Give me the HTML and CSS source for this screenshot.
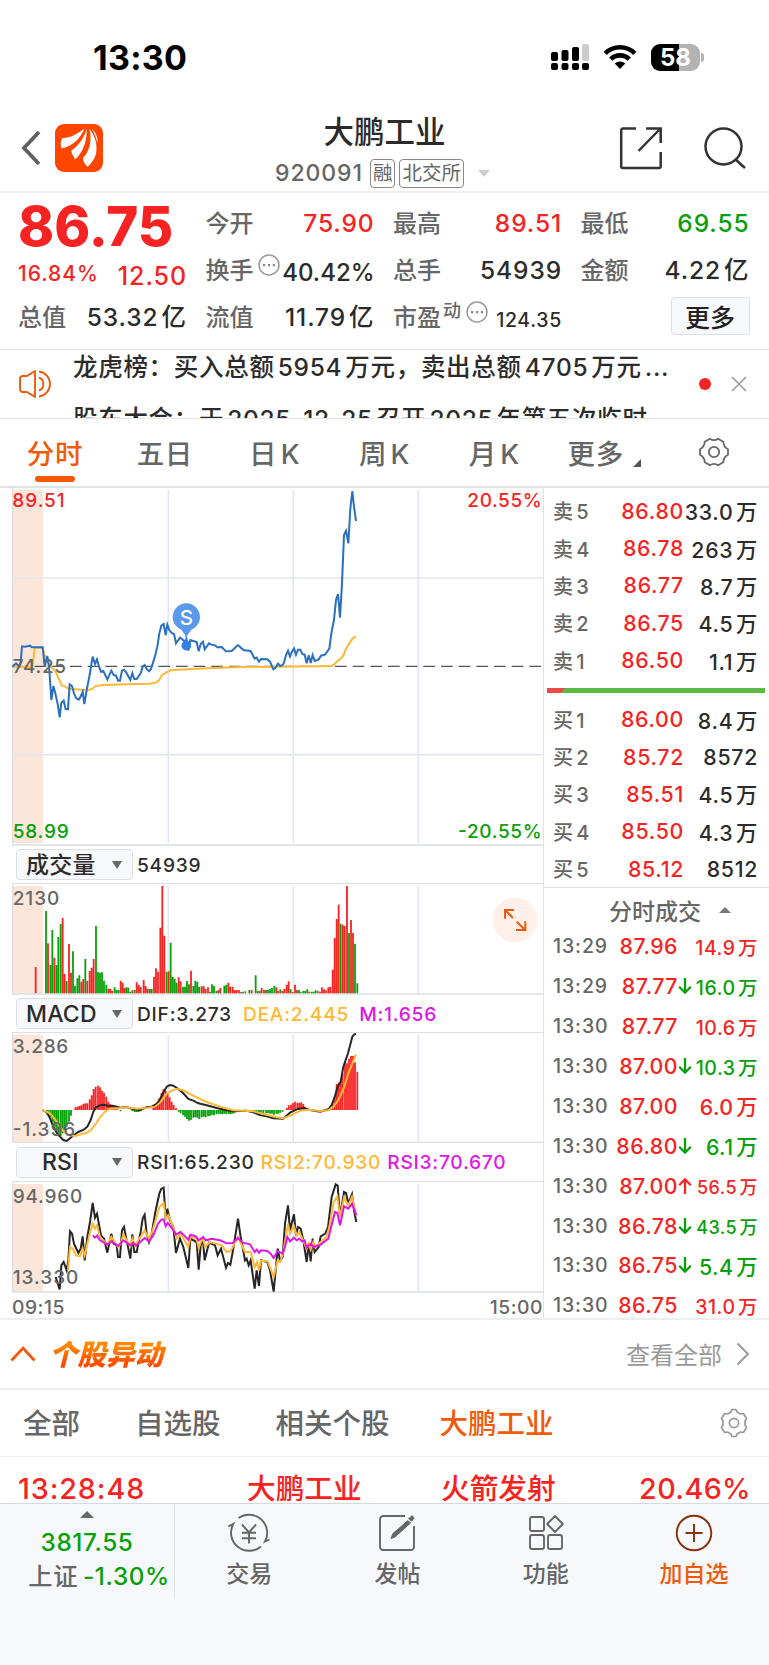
FILE: index.html
```html
<!DOCTYPE html>
<html lang="zh-CN">
<head>
    <meta charset="UTF-8">
    <meta name="viewport" content="width=device-width, initial-scale=1.0">
    <title>大鹏工业 920091</title>
    <link rel="stylesheet" href="styles.css">
</head>
<body>
    <!-- 状态栏 -->
    <div class="status">
        <span class="clock">13:30</span>
        <svg class="signal" width="38" height="28" viewBox="0 0 38 28">
            <g fill="#000">
                <rect x="0" y="9" width="7" height="9" rx="2"/><rect x="10.500" y="7" width="7" height="11" rx="2"/><rect x="21" y="4" width="7" height="14" rx="2"/>
                <rect x="0" y="20" width="7" height="7" rx="2"/><rect x="10.500" y="20" width="7" height="7" rx="2"/><rect x="21" y="20" width="7" height="7" rx="2"/><rect x="31" y="20" width="7" height="7" rx="2"/>
            </g>
            <rect x="31" y="1" width="7" height="17" rx="2" fill="#ccc"/>
        </svg>
        <svg class="wifi" width="34" height="26" viewBox="0 0 34 26">
            <g fill="none" stroke="#000" stroke-width="4.600">
                <path d="M2.200 9.300A21 21 0 0 1 31.800 9.300"/>
                <path d="M7.700 15.200A13.200 13.200 0 0 1 26.300 15.200"/>
            </g>
            <path d="M17 25L11.700 19.600A7.600 7.600 0 0 1 22.300 19.600Z"/>
        </svg>
        <div class="battery"><span>58</span></div>
    </div>

    <!-- 标题 -->
    <div class="header">
        <div class="header-left">
            <svg width="22" height="38" viewBox="0 0 22 38"><path d="M19 3L4 19L19 35" fill="none" stroke="#606060" stroke-width="3.800"/></svg>
            <svg class="logo" width="48" height="48" viewBox="0 0 48 48">
                <rect width="48" height="48" rx="9" fill="#ff4500"/>
                <g fill="#fff">
                    <path d="M6.500 24.500C5 20 6 16 7.500 14C14 14.500 22 10 29.500 4.500C26 13 19 22 6.500 24.500Z"/>
                    <path d="M31.500 4.500C32.500 14 29 28 20 35.500C18.500 32 16.500 29 16 27C24 21 30 13 31.500 4.500Z"/>
                    <path d="M34.500 5C41 13 42.500 22 41 30C39 36 35.500 40 32.500 43C29.500 40 28 37 28 34C35 27 37 15 34.500 5Z"/>
                    <path d="M36.500 4.500C41.500 9 43 14 42.500 20C41.500 14 39.500 9 36.500 4.500Z"/>
                </g>
            </svg>
        </div>
        <div class="title">
            <h1>大鹏工业</h1>
            <div class="code">920091<span class="tag tag-first">融</span><span class="tag">北交所</span><i class="caret"></i></div>
        </div>
        <div class="header-right">
            <svg width="44" height="44" viewBox="0 0 44 44" fill="none" stroke="#333" stroke-width="2.500">
                <path d="M17 2.500H4Q2.200 2.500 2.200 4.500V40.500Q2.200 42 4 42H40Q41.700 42 41.700 40.500V26M27 2.500H41.700V17M41 3L19.500 25"/>
            </svg>
            <svg width="44" height="44" viewBox="0 0 44 44" fill="none" stroke="#333" stroke-width="2.500">
                <circle cx="20.500" cy="20.500" r="18"/><path d="M32 33L42 42"/>
            </svg>
        </div>
    </div>

    <!-- 行情 -->
    <div class="quote">
        <div class="quote-col main">
            <div class="price">86.75</div>
            <div class="line change"><span>16.84%</span><b>12.50</b></div>
            <div class="line"><label>总值</label><span>53.32亿</span></div>
        </div>
        <div class="quote-col">
            <div class="line"><label>今开</label><span class="red">75.90</span></div>
            <div class="line"><label>换手</label><svg class="dots" width="22" height="22" viewBox="0 0 22 22"><circle cx="11" cy="11" r="10" fill="none" stroke="#999" stroke-width="1.500"/><path d="M5 10h2.200v2.200H5zM9.900 10h2.200v2.200H9.900zM14.800 10h2.200v2.200h-2.200z" fill="#888"/></svg><span class="ratio">40.42%</span></div>
            <div class="line"><label>流值</label><span>11.79亿</span></div>
        </div>
        <div class="quote-col">
            <div class="line"><label>最高</label><span class="red">89.51</span></div>
            <div class="line"><label>总手</label><span>54939</span></div>
            <div class="line"><label>市盈<sup>动</sup></label><svg class="dots" width="22" height="22" viewBox="0 0 22 22"><circle cx="11" cy="11" r="10" fill="none" stroke="#999" stroke-width="1.500"/><path d="M5 10h2.200v2.200H5zM9.900 10h2.200v2.200H9.900zM14.800 10h2.200v2.200h-2.200z" fill="#888"/></svg><span class="pe">124.35</span></div>
        </div>
        <div class="quote-col">
            <div class="line"><label>最低</label><span class="green">69.55</span></div>
            <div class="line"><label>金额</label><span>4.22亿</span></div>
            <div class="line"><button class="more">更多</button></div>
        </div>
    </div>

    <!-- 公告滚动 -->
    <div class="news">
        <svg class="horn" width="36" height="30" viewBox="0 0 36 30" fill="none" stroke="#f05a0a" stroke-width="1.900">
            <path d="M17 2L9 7H4.500Q2 7.500 2 10V20Q2 22.500 4.500 23H9L17 28Z" stroke-linejoin="round"/>
            <path d="M21 8.500A7 7 0 0 1 21 21.500M21 2.500A12.600 12.600 0 0 1 21 27.500"/>
        </svg>
        <div class="news-list">
            <p>龙虎榜：买入总额5954万元，卖出总额4705万元...</p>
            <p>股东大会：于2025-12-25召开2025年第五次临时</p>
        </div>
        <i class="dot"></i>
        <svg width="16" height="16" viewBox="0 0 16 16"><path d="M1 1L15 15M15 1L1 15" stroke="#999" stroke-width="1.500"/></svg>
    </div>

    <div class="tabs">
        <a class="active">分时</a>
        <a>五日</a>
        <a>日K</a>
        <a>周K</a>
        <a>月K</a>
        <a>更多<i class="corner"></i></a>
        <a><svg width="32" height="32" viewBox="0 0 32 32" fill="none" stroke="#666" stroke-width="1.800"><path d="M12 2.800Q16 5.500 20 2.800L25.300 5.800Q25.500 11 30 13.200V18.800Q25.500 21 25.300 26.200L20 29.200Q16 26.500 12 29.200L6.700 26.200Q6.500 21 2 18.800V13.200Q6.500 11 6.700 5.800Z" stroke-linejoin="round"/><circle cx="16" cy="16" r="5.200"/></svg></a>
    </div>

    <div class="market">
        <div class="charts">
            <!-- 分时图 -->
            <svg class="chart" width="544" height="359" viewBox="0 21 1632 1077">
                <rect class="pre" x="38" y="30" width="91" height="1059"/>
                <path class="grid" d="M505 30V1089M880 30V1089M1255 30V1089M38 294H1630M38 824H1630"/>
                <path class="frame" d="M38 21V1095H1632"/>
                <path d="M104 559H1630" stroke="#555" stroke-width="4" stroke-dasharray="35 18" fill="none"/>
                <polyline class="avg" points="37,560 98,560 104,503 128,503 132,520 142,542 152,560 165,572 178,600 186,617 196,620 206,626 245,629 268,630 278,626 285,619 305,615 380,613 450,611 470,607 478,600 485,586 500,577 512,571 560,568 640,564 720,561 840,560 994,558 1004,552 1013,543 1025,533 1031,524 1037,508 1048,490 1058,475 1068,469"/>
                <polyline class="now" points="37,560 48,550 58,560 62,548 66,499 75,500 90,497 96,502 128,502 134,560 142,528 148,570 154,660 160,618 166,640 173,672 179,712 184,668 191,662 197,688 204,688 209,613 216,618 222,640 229,655 236,659 242,650 248,635 253,672 260,630 268,590 273,560 278,530 285,552 291,538 297,560 303,575 310,573 322,598 334,572 341,585 348,587 354,602 360,602 366,572 372,569 379,578 391,600 397,580 403,597 410,597 422,580 428,560 434,555 440,567 447,574 453,567 460,545 466,525 472,500 478,460 484,437 491,432 497,465 502,434 508,450 515,459 522,462 528,490 540,473 546,477 552,483 560,480 565,512 571,480 590,486 596,514 602,492 609,485 614,508 627,490 634,494 645,496 652,502 665,501 678,514 695,513 714,495 728,508 733,511 752,513 764,536 770,533 777,545 783,537 802,538 810,545 820,568 826,564 834,551 841,558 848,555 852,548 858,525 864,512 870,530 876,515 882,505 888,524 894,509 901,509 907,522 914,524 920,550 926,526 932,549 938,525 944,543 956,538 963,527 975,524 988,506 994,460 1002,420 1008,360 1014,342 1020,413 1026,310 1032,165 1038,152 1045,190 1051,85 1057,33 1062,80 1068,123"/>
                <path d="M559 460V490" stroke="#2f80e8" stroke-width="5"/>
                <circle cx="559" cy="497" r="14.500" fill="#2f80e8"/>
                <path d="M559 470L544 449A41 41 0 1 1 574 449Z" fill="#5b99ea"/>
                <text x="559" y="434" class="mark">S</text>
                <text x="37" y="81" textLength="157" class="red">89.51</text>
                <text x="38" y="578" textLength="160">74.25</text>
                <text x="38" y="1073" textLength="168" class="green">58.99</text>
                <text x="1402" y="81" textLength="223" class="red">20.55%</text>
                <text x="1374" y="1073" textLength="251" class="green">-20.55%</text>
            </svg>

            <div class="bar">
                <div class="select">成交量<i></i></div>
                <span>54939</span>
            </div>
            <svg class="chart" width="544" height="112" viewBox="0 129 1632 336">
                <rect class="pre" x="38" y="138" width="91" height="323"/>
                <path class="grid" d="M505 138V461M880 138V461M1255 138V461"/>
                <path class="frame" d="M38 130V462H1632M38 130H1632"/>
                <path class="bars up" d="M107 460V381M144 460V310M163 460V353M188 460V234M194 460V402M207 460V312M213 460V398M244 460V425M250 460V417M262 460V422M269 460V393M275 460V383M281 460V357M325 460V446M331 460V446M337 460V452M362 460V422M368 460V428M374 460V444M397 460V451M410 460V427M416 460V434M422 460V441M431 460V420M437 460V438M443 460V446M462 460V410M468 460V385M474 460V395M481 460V263M487 460V138M493 460V287M506 460V394M536 460V412M542 460V424M573 460V392M605 460V439M611 460V439M617 460V447M624 460V442M655 460V450M661 460V444M685 460V428M691 460V440M698 460V440M704 460V450M710 460V450M717 460V450M729 460V455M755 460V450M773 460V452M785 460V444M792 460V450M829 460V442M835 460V453M847 460V452M853 460V446M860 460V434M866 460V424M878 460V456M885 460V434M891 460V450M928 460V455M953 460V453M960 460V455M966 460V442M972 460V448M978 460V451M985 460V442M991 460V441M998 460V389M1004 460V294M1010 460V237M1016 460V194M1028 460V254M1034 460V258M1041 460V138M1053 460V240M1059 460V279"/>
                <path class="bars down" d="M138 460V213M151 460V375M157 460V270M169 460V375M175 460V291M182 460V252M200 460V423M219 460V334M225 460V437M232 460V415M238 460V406M256 460V357M288 460V258M294 460V396M300 460V398M306 460V397M312 460V422M319 460V434M344 460V442M350 460V450M356 460V450M379 460V442M385 460V443M391 460V455M404 460V450M449 460V447M455 460V447M500 460V395M512 460V308M518 460V411M524 460V416M530 460V428M549 460V440M555 460V440M561 460V423M567 460V433M580 460V438M586 460V422M592 460V426M598 460V440M630 460V455M636 460V433M642 460V438M649 460V453M673 460V437M679 460V434M723 460V456M736 460V454M748 460V450M767 460V406M779 460V452M798 460V450M804 460V450M810 460V447M816 460V444M823 460V438M841 460V448M872 460V448M897 460V450M903 460V457M910 460V453M916 460V453M922 460V448M935 460V455M941 460V455M947 460V451M1022 460V251M1047 460V279M1065 460V311M1072 460V430"/>
                <text x="38" y="194" textLength="140">2130</text>
                <circle cx="1545" cy="240" r="67" fill="#fef0e8"/>
                <path d="M1515 236V210H1542M1516 211L1539 234M1576 244V270H1548M1575 269L1550 245" fill="none" stroke="#f05a0a" stroke-width="6"/>
            </svg>

            <div class="bar bar-macd">
                <div class="select">MACD<i></i></div>
                <span>DIF:3.273</span><span class="yellow">DEA:2.445</span><span class="purple">M:1.656</span>
            </div>
            <svg class="chart" width="544" height="111" viewBox="0 -144 1632 333">
                <rect class="pre" x="38" y="-136" width="91" height="321"/>
                <path class="grid" d="M505 -136V185M880 -136V185M1255 -136V185"/>
                <path class="frame" d="M38 -144V187H1632M38 -143H1632"/>
                <path class="bars up" d="M226 90V82M232 90V80M238 90V78M244 90V76M250 90V72M256 90V70M262 90V70M269 90V58M275 90V46M281 90V27M287 90V20M294 90V17M300 90V22M306 90V32M312 90V38M319 90V50M325 90V65M331 90V72M337 90V74M344 90V80M350 90V84M460 90V80M466 90V74M472 90V66M478 90V55M484 90V40M490 90V28M497 90V33M503 90V42M509 90V52M515 90V65M521 90V75M528 90V84M860 90V84M866 90V76M873 90V74M879 90V69M885 90V65M892 90V68M898 90V69M904 90V67M910 90V72M916 90V80M991 90V84M998 90V70M1004 90V50M1010 90V12M1016 90V8M1022 90V6M1028 90V-20M1035 90V-53M1041 90V-50M1047 90V-64M1053 90V-72M1059 90V-72M1065 90V-53M1072 90V-25"/>
                <path class="bars down" d="M138 90V95M144 90V102M151 90V112M157 90V125M163 90V140M169 90V150M175 90V158M182 90V168M188 90V160M194 90V150M200 90V140M207 90V125M213 90V107M362 90V94M397 90V93M404 90V96M410 90V96M416 90V96M422 90V94M536 90V95M542 90V100M549 90V105M555 90V110M561 90V117M567 90V122M573 90V119M580 90V113M586 90V112M592 90V113M598 90V117M605 90V112M611 90V110M617 90V112M624 90V109M630 90V108M636 90V104M642 90V106M649 90V103M655 90V101M661 90V102M667 90V103M673 90V101M679 90V103M686 90V102M692 90V102M698 90V101M704 90V98M710 90V96M716 90V94M740 90V94M752 90V96M764 90V98M770 90V97M777 90V99M783 90V98M790 90V99M798 90V100M804 90V99M810 90V101M816 90V101M822 90V104M829 90V102M835 90V101M841 90V98M848 90V95"/>
                <polyline class="dif" points="128,90 140,97 150,115 160,140 170,158 180,170 190,180 200,183 212,173 222,165 235,156 250,150 262,140 272,120 280,95 288,82 300,76 310,74 325,77 345,79 360,83 380,81 400,88 420,90 440,82 455,80 470,72 480,58 490,38 500,20 510,15 520,17 535,27 550,40 565,57 580,62 595,70 620,76 650,84 680,91 700,94 740,92 760,97 780,105 800,109 820,115 850,116 870,98 890,88 910,84 930,90 960,95 985,88 995,75 1005,48 1013,20 1022,5 1030,-40 1044,-80 1057,-130 1063,-137 1068,-138"/>
                <polyline class="avg" points="128,90 150,100 165,118 180,140 190,153 205,165 225,168 245,162 262,158 275,148 285,135 300,112 315,95 330,86 360,84 380,82 410,86 440,84 465,80 480,68 500,42 515,32 530,27 548,30 570,42 590,52 620,66 660,80 700,91 760,94 790,102 830,112 850,115 875,105 900,92 925,89 960,93 985,91 1000,80 1015,60 1032,22 1045,-20 1068,-77"/>
                <text x="38" y="-80" textLength="167">3.286</text>
                <text x="38" y="167" textLength="188">-1.396</text>
            </svg>

            <div class="bar bar-rsi">
                <div class="select select-rsi">RSI<i></i></div>
                <span>RSI1:65.230</span><span class="yellow">RSI2:70.930</span><span class="purple">RSI3:70.670</span>
            </div>
            <svg class="chart" width="544" height="112" viewBox="0 302 1632 336">
                <rect class="pre" x="38" y="311" width="91" height="322"/>
                <path class="grid" d="M505 311V633M880 311V633M1255 311V633"/>
                <path class="frame" d="M38 302V635H1632M38 303H1632"/>
                <polyline class="dif" points="167,590 179,627 184,555 191,545 200,570 205,540 210,453 216,460 222,490 235,518 242,505 248,468 254,540 262,470 270,425 278,368 285,412 291,400 303,465 312,475 322,517 334,460 341,490 350,495 354,530 360,530 366,450 372,440 379,475 391,535 397,462 403,515 410,515 422,455 428,415 434,403 440,460 447,485 455,460 466,395 478,340 484,325 491,322 497,415 502,385 510,420 520,440 528,518 540,475 550,500 565,563 571,475 590,485 596,568 602,495 609,480 614,540 627,487 645,495 653,525 663,505 678,562 684,548 691,553 700,505 714,415 722,470 728,500 735,540 740,535 746,555 752,540 764,625 770,570 777,617 783,540 802,545 810,570 821,634 833,505 840,540 848,530 855,430 864,375 870,450 882,402 888,465 894,440 902,445 910,480 920,545 926,490 932,543 938,475 944,515 956,500 962,468 976,460 984,440 995,350 1007,312 1013,316 1020,410 1032,335 1038,338 1045,370 1056,342 1063,395 1069,425"/>
                <polyline class="avg" points="204,570 210,500 218,505 228,525 240,528 248,505 254,525 268,465 278,430 285,445 291,435 300,470 322,492 334,470 354,500 362,490 370,462 391,498 397,475 405,495 425,465 434,450 447,475 458,450 478,380 491,368 498,415 505,405 520,440 530,475 542,460 565,500 572,468 590,475 596,503 603,485 609,472 615,500 630,485 665,495 680,515 692,512 714,470 735,515 752,515 764,560 771,545 777,570 783,541 803,543 821,590 833,540 841,545 850,515 864,430 870,460 882,438 890,465 898,455 920,505 926,490 932,508 940,485 945,500 962,485 980,470 990,430 1001,365 1012,348 1020,410 1032,352 1045,375 1056,350 1069,405"/>
                <polyline class="rsi3" points="278,465 285,472 291,466 300,480 322,493 335,483 354,497 370,480 391,495 400,487 408,496 434,473 447,483 460,465 474,430 484,418 491,417 497,438 503,428 515,442 528,462 542,455 555,468 565,478 571,463 588,468 596,480 609,470 618,480 635,475 660,480 680,489 698,488 714,473 728,487 750,492 764,515 770,508 777,517 783,510 802,512 812,520 821,533 833,512 848,520 855,500 862,470 870,483 882,472 890,480 898,475 906,483 914,480 920,502 932,490 940,500 960,494 985,475 992,445 1005,395 1012,398 1020,435 1032,378 1045,385 1056,370 1069,405"/>
                <text x="38" y="367" textLength="209">94.960</text>
                <text x="38" y="612" textLength="197">13.330</text>
            </svg>
            <div class="times"><span>09:15</span><span>15:00</span></div>
        </div>

        <div class="side">
            <div class="book">
                <div><label>卖5</label><b>86.80</b><span>33.0万</span></div>
                <div><label>卖4</label><b>86.78</b><span>263万</span></div>
                <div><label>卖3</label><b>86.77</b><span>8.7万</span></div>
                <div><label>卖2</label><b>86.75</b><span>4.5万</span></div>
                <div><label>卖1</label><b>86.50</b><span>1.1万</span></div>
            </div>
            <div class="power"></div>
            <div class="book">
                <div><label>买1</label><b>86.00</b><span>8.4万</span></div>
                <div><label>买2</label><b>85.72</b><span>8572</span></div>
                <div><label>买3</label><b>85.51</b><span>4.5万</span></div>
                <div><label>买4</label><b>85.50</b><span>4.3万</span></div>
                <div><label>买5</label><b>85.12</b><span>8512</span></div>
            </div>
            <div class="deal-title">分时成交<i></i></div>
            <div class="deals">
                <div><label>13:29</label><b>87.96</b><i></i><span class="red mid">14.9万</span></div>
                <div><label>13:29</label><b>87.77</b><i><svg class="green" width="14" height="18" viewBox="0 0 14 18"><path d="M7 1V15.500M1.200 9.700L7 15.700L12.800 9.700"/></svg></i><span class="green mid">16.0万</span></div>
                <div><label>13:30</label><b>87.77</b><i></i><span class="red mid">10.6万</span></div>
                <div><label>13:30</label><b>87.00</b><i><svg class="green" width="14" height="18" viewBox="0 0 14 18"><path d="M7 1V15.500M1.200 9.700L7 15.700L12.800 9.700"/></svg></i><span class="green mid">10.3万</span></div>
                <div><label>13:30</label><b>87.00</b><i></i><span class="red">6.0万</span></div>
                <div><label>13:30</label><b>86.80</b><i><svg class="green" width="14" height="18" viewBox="0 0 14 18"><path d="M7 1V15.500M1.200 9.700L7 15.700L12.800 9.700"/></svg></i><span class="green">6.1万</span></div>
                <div><label>13:30</label><b>87.00</b><i><svg class="red" width="14" height="18" viewBox="0 0 14 18"><path d="M7 17V2.500M1.200 8.300L7 2.300L12.800 8.300"/></svg></i><span class="red small">56.5万</span></div>
                <div><label>13:30</label><b>86.78</b><i><svg class="green" width="14" height="18" viewBox="0 0 14 18"><path d="M7 1V15.500M1.200 9.700L7 15.700L12.800 9.700"/></svg></i><span class="green small">43.5万</span></div>
                <div><label>13:30</label><b>86.75</b><i><svg class="green" width="14" height="18" viewBox="0 0 14 18"><path d="M7 1V15.500M1.200 9.700L7 15.700L12.800 9.700"/></svg></i><span class="green">5.4万</span></div>
                <div><label>13:30</label><b>86.75</b><i></i><span class="red mid">31.0万</span></div>
            </div>
        </div>
    </div>

    <!-- 个股异动 -->
    <div class="moves-head">
        <svg width="26" height="18" viewBox="0 0 26 18"><path d="M1.500 15.500L13 3L24.500 15.500" fill="none" stroke="#f05a0a" stroke-width="2.800"/></svg>
        <h2><span>个股异动</span></h2>
        <a>查看全部</a>
        <svg width="14" height="24" viewBox="0 0 14 24"><path d="M1.500 1.500L12 12L1.500 22.500" fill="none" stroke="#999" stroke-width="2"/></svg>
    </div>
    <div class="moves-tabs">
        <a>全部</a>
        <a>自选股</a>
        <a>相关个股</a>
        <a class="active">大鹏工业</a>
        <svg width="30" height="30" viewBox="0 0 30 30" fill="none" stroke="#999" stroke-width="1.700" stroke-linejoin="round"><path d="M12 4L13 1.500H17L18 4L21.500 6L24.500 5.500L27.500 10.500L26 13V17L27.500 19.500L24.500 24.500L21.500 24L18 26L17 28.500H13L12 26L8.500 24L5.500 24.500L2.500 19.500L4 17V13L2.500 10.500L5.500 5.500L8.500 6Z"/><circle cx="15" cy="15" r="4.600"/></svg>
    </div>
    <div class="moves-row">
        <span class="num">13:28:48</span>
        <span>大鹏工业</span>
        <span>火箭发射</span>
        <span class="pct">20.46%</span>
    </div>

    <!-- 底部 -->
    <div class="footer">
        <div class="index">
            <i></i>
            <div class="green">3817.55</div>
            <div class="index-name">上证<span class="green">-1.30%</span></div>
        </div>
        <div class="nav">
            <svg width="44" height="40" viewBox="0 0 44 40" fill="none" stroke="#666" stroke-width="1.900">
                <path d="M11.500 5A18.200 18.200 0 0 1 38 28.500L42.500 26.500"/><path d="M34 33.500A18.200 18.200 0 0 1 6.200 11L1.200 13.500"/>
                <path d="M15 11.500L22 19.500L29 11.500M22 19.500V30.500M15 19.800H29M15 25.300H29"/>
            </svg>
            <span>交易</span>
        </div>
        <div class="nav">
            <svg width="40" height="40" viewBox="0 0 40 40" fill="none" stroke="#666" stroke-width="1.900">
                <path d="M28 3H6.500Q3 3 3 6.500V33.500Q3 37 6.500 37H33.500Q37 37 37 33.500V13"/>
                <path d="M14 25.500L16 20.500L31 7.500L33.500 10L18 24Z" fill="#666" stroke-width="1"/><path d="M33 5.800L35 4L36 5L34.500 7Z" stroke-width="2.500"/>
            </svg>
            <span>发帖</span>
        </div>
        <div class="nav">
            <svg width="40" height="40" viewBox="0 0 40 40" fill="none" stroke="#666" stroke-width="1.900" stroke-linejoin="round">
                <rect x="4" y="4" width="14" height="14" rx="2"/><rect x="4" y="22" width="14" height="14" rx="2"/><rect x="22" y="22" width="14" height="14" rx="2"/>
                <path d="M29 3L36.800 11L29 19L21.200 11Z"/>
            </svg>
            <span>功能</span>
        </div>
        <div class="nav add">
            <svg width="40" height="40" viewBox="0 0 40 40" fill="none" stroke="#8a2f08" stroke-width="1.900">
                <circle cx="20" cy="20" r="17.300"/><path d="M20 11V29M11.500 20H28.500"/>
            </svg>
            <span>加自选</span>
        </div>
    </div>
</body>
</html>
```
FILE: styles.css
```css
* {
    box-sizing: border-box;
}
body {
    margin: 0;
    width: 769px;
    height: 1665px;
    overflow: hidden;
    background-color: #fff;
    color: #2b2b2b;
    font-family: Inter, "Noto Sans CJK SC", sans-serif;
    font-weight: 500;
    text-autospace: normal;
}
h1, h2, p {
    margin: 0;
}
i {
    font-style: normal;
}
b {
    font-weight: 550;
}
.red {
    color: #f62323;
    fill: #f62323;
}
.green {
    color: #08a008;
    fill: #08a008;
}
.yellow {
    color: #ffb835;
}
.purple {
    color: #e016e6;
}

/* 状态栏 */
.status {
    display: flex;
    align-items: center;
    height: 96px;
    padding: 18px 69px 0 93px;
}
.clock {
    flex: 1;
    color: #000;
    font-size: 34px;
    font-weight: 700;
    letter-spacing: 0.3px;
}
.signal {
    margin-right: 14px;
}
.wifi {
    margin-right: 14px;
}
.battery {
    width: 49px;
    height: 27px;
    border-radius: 9px;
    background: linear-gradient(90deg, #000 58%, #b3b3b3 58%);
    color: #fff;
    text-align: center;
    font-size: 24px;
    line-height: 27px;
    font-weight: 700;
    position: relative;
}
.battery::after {
    content: "";
    position: absolute;
    right: -4px;
    top: 9px;
    width: 3px;
    height: 9px;
    border-radius: 0 4px 4px 0;
    background-color: #b3b3b3;
}

/* 标题 */
.header {
    display: grid;
    grid-template-columns: 1fr auto 1fr;
    height: 97px;
    border-bottom: 2px solid #eee;
}
.header-left {
    display: flex;
    align-items: center;
    gap: 13px;
    padding: 6px 0 0 20px;
    height: 97px;
}
.header-right {
    display: flex;
    align-items: center;
    justify-content: flex-end;
    gap: 40px;
    padding: 6px 22px 0 0;
    height: 97px;
}
.title {
    text-align: center;
}
.title h1 {
    margin-top: 16px;
    font-size: 30.5px;
    line-height: 40px;
    font-weight: 500;
}
.code {
    display: flex;
    align-items: center;
    height: 30px;
    margin: 6px 4px 0 0;
    color: #666;
    font-size: 23px;
    letter-spacing: 0.9px;
}
.tag {
    height: 29px;
    padding: 0 2px;
    margin-left: 4px;
    border: 1.5px solid #888;
    border-radius: 4px;
    font-size: 19.5px;
    line-height: 27px;
    font-weight: 400;
    letter-spacing: 0;
}
.tag-first {
    margin-left: 7px;
}
.caret {
    margin-left: 14px;
    border: 6.5px solid transparent;
    border-top: 7px solid #ccc;
    border-bottom: 0;
}

/* 行情 */
.quote {
    display: grid;
    grid-template-columns: repeat(4, 169px);
    column-gap: 18.5px;
    height: 157px;
    padding: 7px 18px 0;
    border-bottom: 1px solid #e4e4e4;
}
.line {
    display: flex;
    align-items: center;
    height: 47px;
    font-size: 24.5px;
    line-height: 47px;
    letter-spacing: 0.9px;
}
.line label {
    flex: 1;
    color: #666;
    font-size: 24px;
    white-space: nowrap;
    letter-spacing: 0;
}
.line sup {
    font-size: 18px;
    line-height: 1;
    vertical-align: 9px;
    margin-left: 2px;
}
.dots {
    margin-top: -11px;
}
.line .ratio {
    padding: 3px 0 0 2px;
    font-size: 24px;
    letter-spacing: 0;
}
.line .pe {
    padding: 6px 0 0 8px;
    font-size: 19.5px;
    letter-spacing: 0.7px;
}
.price {
    height: 47px;
    margin-top: 3px;
    color: #f62323;
    font-size: 54.5px;
    line-height: 47px;
    font-weight: 800;
}
.main .line {
    margin-top: -3px;
}
.main .line + .line {
    margin-top: 0;
}
.main .change {
    height: 47px;
    justify-content: space-between;
    color: #f62323;
    padding-top: 11px;
}
.change span {
    font-size: 21px;
    letter-spacing: 1px;
    margin-top: -5px;
}
.change b {
    font-size: 25px;
    font-weight: 500;
}
.more {
    width: 79px;
    height: 38px;
    margin-left: auto;
    padding: 0;
    border: 1px solid #dcdfe5;
    border-radius: 4px;
    background-color: #f7f8fb;
    color: #222;
    font: 500 25px/32px "Noto Sans CJK SC", sans-serif;
    margin-top: -3px;
}

/* 公告 */
.news {
    display: flex;
    align-items: center;
    height: 69px;
    padding-left: 18px;
    border-bottom: 1px solid #e8e8e8;
    overflow: hidden;
}
.news-list {
    width: 644px;
    height: 68px;
    padding: 1px 0 0 19px;
}
.news-list p {
    height: 52px;
    font-size: 24.5px;
    line-height: 33px;
    letter-spacing: 0.7px;
    white-space: nowrap;
}
.dot {
    width: 12px;
    height: 12px;
    margin: 0 20px 0 1px;
    border-radius: 50%;
    background-color: #f62323;
}

.tabs {
    display: grid;
    grid-template-columns: repeat(7, 1fr);
    height: 69px;
    margin-bottom: -1px;
    border-bottom: 2px solid #dfe2e6;
}
.tabs a {
    display: flex;
    align-items: center;
    justify-content: center;
    padding-bottom: 2px;
    color: #666;
    font-size: 27.5px;
    letter-spacing: 0.6px;
}
.tabs .active {
    position: relative;
    color: #f05a0a;
}
.tabs .active::after {
    content: "";
    position: absolute;
    left: 35px;
    bottom: 4px;
    width: 40px;
    height: 6px;
    border-radius: 3px;
    background-color: #f05a0a;
}
.corner {
    margin: 22px 0 0 9px;
    border-left: 8px solid transparent;
    border-bottom: 8px solid #555;
}

/* 图表 */
.market {
    display: flex;
    height: 833px;
    border-bottom: 2px solid #eee;
}
.charts {
    width: 544px;
    border-right: 1.5px solid #dfe2e6;
    flex-shrink: 0;
}
.chart {
    display: block;
}
.chart text {
    font-size: 57px;
    font-weight: 550;
    fill: #666;
}
.chart text.red {
    fill: #f62323;
}
.chart text.green {
    fill: #08a008;
}
.chart text.mark {
    fill: #fff;
    font-size: 62px;
    text-anchor: middle;
}
.pre {
    fill: #fce6da;
}
.grid {
    fill: none;
    stroke: #e4e6ef;
    stroke-width: 5;
}
.frame {
    fill: none;
    stroke: #dcdfe3;
    stroke-width: 4;
}
.now, .avg, .dif, .rsi3 {
    fill: none;
    stroke-width: 6;
}
.now {
    stroke: #2a70bf;
}
.avg {
    stroke: #ffb835;
}
.dif {
    stroke: #262626;
}
.rsi3 {
    stroke: #e016e6;
}
.bars {
    stroke-width: 5.4;
}
.up {
    stroke: #f62323;
}
.down {
    stroke: #08a008;
}
.bar {
    display: flex;
    align-items: center;
    height: 37px;
    padding-left: 16px;
    font-size: 19.2px;
    font-weight: 550;
    letter-spacing: 0.75px;
    white-space: nowrap;
}
.bar-rsi {
    height: 38px;
}
.bar span {
    margin-left: 4px;
}
.bar .yellow {
    margin-left: 11px;
}
.bar .purple {
    margin-left: 10px;
}
.bar-rsi .yellow, .bar-rsi .purple {
    margin-left: 6px;
}
.select {
    display: flex;
    align-items: center;
    justify-content: space-between;
    width: 117px;
    height: 31px;
    padding: 0 10px 0 9px;
    border: 1px solid #dcdfe5;
    border-radius: 4px;
    background-color: #f7f8fb;
    font-size: 23px;
    line-height: 28px;
    font-weight: 500;
    letter-spacing: 0.2px;
}
.select-rsi {
    padding-left: 25px;
}
.select i {
    border: 5px solid transparent;
    border-top: 8px solid #666;
    border-bottom: 0;
}
.times {
    display: flex;
    justify-content: space-between;
    padding-left: 12px;
    color: #666;
    font-size: 19.3px;
    font-weight: 550;
    line-height: 28px;
    letter-spacing: 0.5px;
}

/* 五档 */
.side {
    flex: 1;
    padding-top: 5px;
}
.book div {
    display: flex;
    align-items: center;
    height: 37.4px;
    padding: 0 11px 0 9px;
    font-size: 21.3px;
    letter-spacing: 0.7px;
}
.book label {
    width: 50px;
    color: #666;
    font-size: 20px;
}
.book b {
    width: 81px;
    text-align: right;
    color: #f62323;
}
.book span {
    flex: 1;
    text-align: right;
    white-space: nowrap;
}
.power {
    height: 5px;
    margin: 9.5px 4.5px 7px 2.5px;
    background: linear-gradient(135deg, #ec4a4a 13px, #5aba41 13px);
}
.deal-title {
    display: flex;
    align-items: center;
    height: 39px;
    padding: 6px 0 0 65px;
    border-top: 1.5px solid #dfe2e6;
    color: #666;
    font-size: 23px;
}
.deal-title i {
    margin-left: 18px;
    border: 6px solid transparent;
    border-bottom: 6px solid #777;
    border-top: 0;
}
.deals div {
    display: flex;
    align-items: center;
    height: 39.9px;
    padding: 0 11px 0 9px;
    font-size: 21.3px;
    letter-spacing: 0.5px;
}
.deals label {
    width: 54px;
    color: #666;
    font-size: 19.5px;
    letter-spacing: 0.9px;
}
.deals b {
    width: 71px;
    text-align: right;
    color: #f62323;
}
.deals i {
    display: flex;
    width: 15px;
}
.deals svg {
    fill: none;
    stroke: currentColor;
    stroke-width: 2.3;
}
.deals span {
    flex: 1;
    text-align: right;
    white-space: nowrap;
}
.deals .mid {
    font-size: 19.5px;
}
.deals .small {
    font-size: 18px;
}

/* 异动 */
.moves-head {
    display: flex;
    align-items: center;
    height: 70px;
    padding: 0 19px 0 10px;
    border-bottom: 2px solid #eee;
}
.moves-head h2 {
    flex: 1;
    margin: -4px 0 0 13px;
    font-size: 28.5px;
    font-weight: 900;
    font-style: italic;
}
.moves-head h2 span {
    padding-right: 6px;
    background: linear-gradient(#ff8800 25%, #ff4d00 75%);
    background-clip: text;
    -webkit-background-clip: text;
    color: transparent;
}
.moves-head a {
    margin: -2px 14px 0 0;
    color: #999;
    font-size: 24px;
    font-weight: 400;
}
.moves-tabs {
    display: flex;
    align-items: center;
    height: 67px;
    padding: 0 20px 0 23px;
    border-bottom: 1px solid #eee;
    color: #666;
    font-size: 28.5px;
}
.moves-tabs a {
    margin: -4px 55px 0 0;
}
.moves-tabs a:nth-child(3) {
    margin-right: 50px;
}
.moves-tabs a.active {
    flex: 1;
    margin-right: 0;
    color: #f05a0a;
}
.moves-row {
    display: grid;
    grid-template-columns: 229px 194px 1fr auto;
    height: 46px;
    padding: 0 18px 0 18px;
    color: #f62323;
    font-size: 28.7px;
    line-height: 63px;
    overflow: hidden;
}
.moves-row .num {
    letter-spacing: 0.9px;
}
.moves-row .pct {
    letter-spacing: 0.4px;
}

/* 底部 */
.footer {
    display: grid;
    grid-template-columns: 175px repeat(4, 1fr);
    height: 162px;
    padding-right: 1px;
    border-top: 1px solid #d5d8dd;
    background-color: #f7f8fb;
}
.index {
    height: 95px;
    border-right: 1px solid #dfe2e6;
    text-align: center;
    font-size: 24.3px;
    letter-spacing: 0.6px;
}
.index i {
    display: block;
    width: 14px;
    margin: 7px auto 7px;
    border: 7px solid transparent;
    border-bottom: 7px solid #666;
    border-top: 0;
}
.index div {
    line-height: 34px;
}
.index .index-name {
    padding-left: 24px;
    color: #666;
    white-space: nowrap;
}
.index-name span {
    margin-left: 5px;
}
.nav {
    display: flex;
    flex-direction: column;
    align-items: center;
    padding-top: 9px;
    color: #666;
    font-size: 23px;
    line-height: 34px;
}
.nav span {
    margin-top: 4px;
}
.add {
    color: #f05a0a;
}
```
